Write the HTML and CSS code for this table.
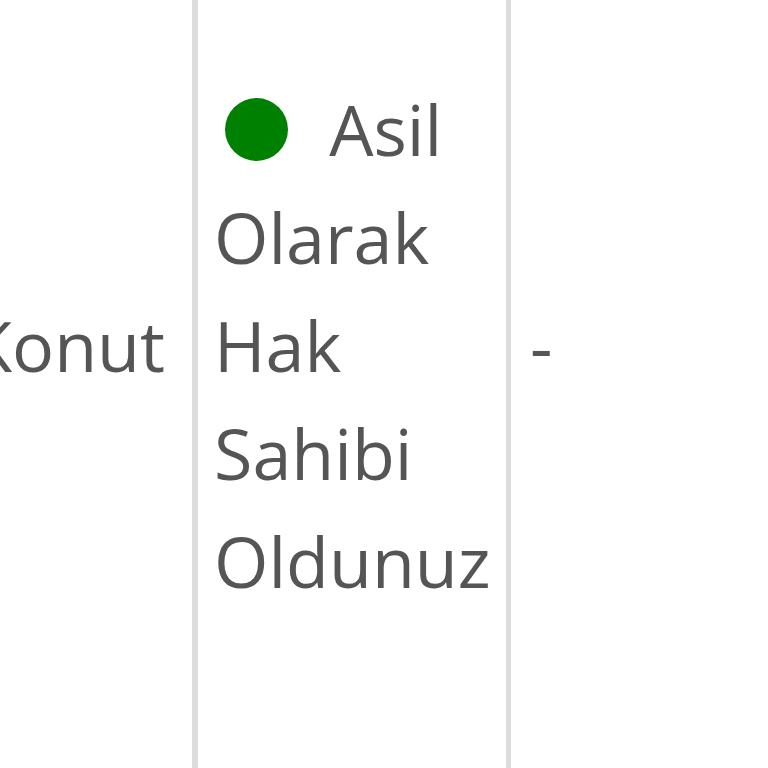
FILE: index.html
```html
<!DOCTYPE html>
<html lang="tr">
<head>
<meta charset="utf-8">
<link rel="stylesheet" href="styles.css">
</head>
<body>
<div class="row">
  <div class="cell cell-type"><span class="nowrap">Konut</span></div>
  <div class="cell cell-status"><div class="status"><span class="dot"></span> Asil Olarak Hak Sahibi Oldunuz</div></div>
  <div class="cell cell-extra">-</div>
</div>
</body>
</html>
```

FILE: styles.css
```css
html, body {
  margin: 0;
  padding: 0;
  background: #ffffff;
  overflow: hidden;
}
body {
  font-family: "Open Sans", "Liberation Sans", sans-serif;
  font-size: 70px;
  line-height: 108px;
  color: #555555;
}
.row {
  display: flex;
  height: 768px;
}
.cell {
  box-sizing: border-box;
  height: 768px;
  padding-bottom: 79px;
  display: flex;
  align-items: center;
}
.cell-type {
  width: 192px;
  flex: none;
  justify-content: flex-end;
  padding-right: 27px;
}
.nowrap {
  white-space: nowrap;
}
.cell-status {
  width: 319px;
  flex: none;
  border-left: 6px solid #dcdcdc;
  border-right: 5px solid #dcdcdc;
  padding-left: 16px;
  padding-right: 10px;
}
.cell-extra {
  flex: 1;
  padding-left: 19px;
}
.dot {
  display: inline-block;
  width: 63px;
  height: 63px;
  border-radius: 50%;
  background: #008000;
  margin-left: 11px;
  margin-right: 23px;
  vertical-align: -5px;
}
```
